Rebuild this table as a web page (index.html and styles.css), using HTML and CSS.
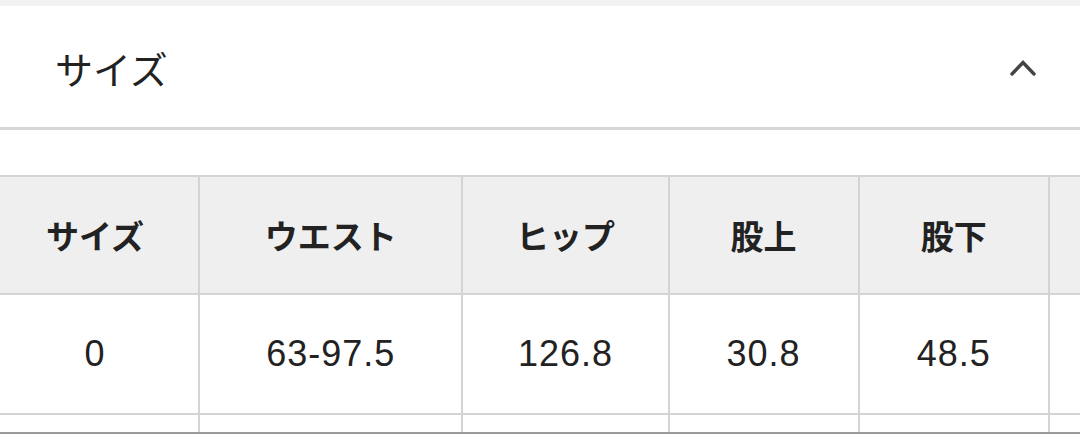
FILE: index.html
```html
<!DOCTYPE html>
<html lang="ja">
<head>
<meta charset="utf-8">
<title>サイズ</title>
<link rel="stylesheet" href="styles.css">
</head>
<body>
<div class="top-strip"></div>
<section class="accordion">
  <header class="acc-head">
    <h2 class="acc-title">サイズ</h2>
    <svg class="chevron" width="28" height="20" viewBox="0 0 28 20" aria-hidden="true">
      <polyline points="3,16 14,4.5 25,16" fill="none" stroke="#444" stroke-width="3.4" stroke-linecap="round" stroke-linejoin="miter"/>
    </svg>
  </header>
  <div class="acc-body">
    <div class="table-wrap">
      <table class="size-table">
        <colgroup>
          <col class="c1"><col class="c2"><col class="c3"><col class="c4"><col class="c5"><col class="c6">
        </colgroup>
        <thead>
          <tr class="head-row">
            <th>サイズ</th><th>ウエスト</th><th>ヒップ</th><th>股上</th><th>股下</th><th></th>
          </tr>
        </thead>
        <tbody>
          <tr class="data-row">
            <td>0</td><td>63-97.5</td><td>126.8</td><td>30.8</td><td>48.5</td><td></td>
          </tr>
          <tr class="data-row">
            <td></td><td></td><td></td><td></td><td></td><td></td>
          </tr>
        </tbody>
      </table>
    </div>
  </div>
</section>
<div class="bottom-edge"></div>
</body>
</html>
```

FILE: styles.css
```css
html, body {
  margin: 0;
  padding: 0;
  background: #ffffff;
  overflow: hidden;
}
body {
  font-family: "Liberation Sans", "Noto Sans CJK JP", sans-serif;
  color: #222222;
  height: 434px;
}
.top-strip {
  height: 6px;
  background: #f2f2f2;
}
.acc-head {
  height: 121px;
  display: flex;
  align-items: center;
  justify-content: space-between;
  padding: 0 43px 0 55px;
  border-bottom: 3px solid #d6d6d6;
}
.acc-title {
  margin: 0;
  font-family: "Noto Sans CJK JP", sans-serif;
  font-weight: 400;
  font-size: 38px;
  color: #222222;
  line-height: 1;
  padding-top: 2px;
}
.chevron {
  display: block;
  margin-top: 2px;
}
.acc-body {
  padding-top: 45px;
}
.table-wrap {
  overflow: hidden;
  margin-left: -10px;
}
.size-table {
  table-layout: fixed;
  border-collapse: separate;
  border-spacing: 2px;
  background: #d4d4d4;
  width: 1250px;
}
.c1 { width: 206px; }
.c2 { width: 261px; }
.c3 { width: 204px; }
.c4 { width: 188px; }
.c5 { width: 188px; }
.c6 { width: 188px; }
.size-table th,
.size-table td {
  padding: 0;
  text-align: center;
  vertical-align: middle;
}
.head-row th {
  height: 116px;
  background: #efefef;
  font-family: "Noto Sans CJK JP", sans-serif;
  font-weight: 700;
  font-size: 33px;
  color: #222222;
}
.data-row td {
  height: 118px;
  background: #ffffff;
  font-size: 36px;
  letter-spacing: 1px;
  color: #222222;
}
.bottom-edge {
  position: fixed;
  left: 0;
  right: 0;
  bottom: 0;
  height: 2px;
  background: #9a9a9a;
}
```
